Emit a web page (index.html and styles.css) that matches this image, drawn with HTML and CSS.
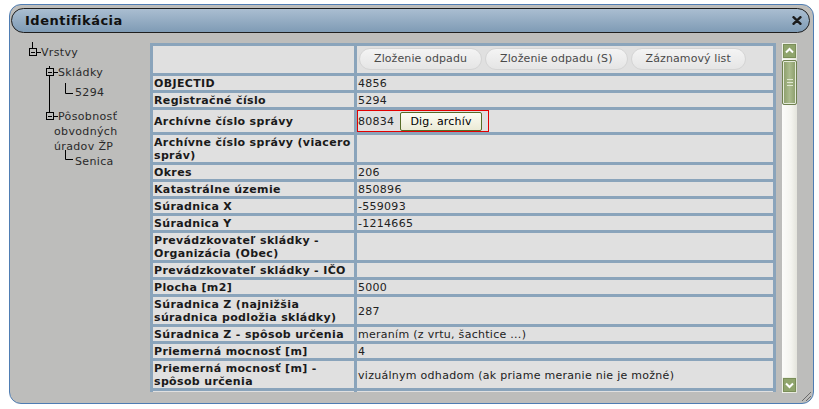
FILE: index.html
```html
<!DOCTYPE html>
<html lang="sk">
<head>
<meta charset="utf-8">
<title>Identifikácia</title>
<link rel="stylesheet" href="styles.css">
</head>
<body>
<div class="window">
  <div class="titlebar">
    <span class="title">Identifikácia</span>
    <svg class="close" width="10" height="9" viewBox="0 0 10 9"><path d="M1.5 1.2 L8.5 7.8 M8.5 1.2 L1.5 7.8" stroke="#1c1c1c" stroke-width="2.4" stroke-linecap="round"/></svg>
  </div>
  <div class="content">
    <div class="tree">
      <div class="node lvl0">
        <svg class="ic" width="12" height="15" viewBox="0 0 12 15"><path d="M3.5 -3 V3" stroke="#000"/><rect x="0.5" y="3.5" width="7" height="7" fill="none" stroke="#000"/><path d="M2 7.5 H6 M8 7.5 H12" stroke="#000"/></svg><span>Vrstvy</span>
      </div>
      <div class="node lvl1 skl">
        <svg class="ic" width="12" height="15" viewBox="0 0 12 15"><path d="M3.5 1 V3 M3.5 11 V47" stroke="#000"/><rect x="0.5" y="3.5" width="7" height="7" fill="none" stroke="#000"/><path d="M2 7.5 H6 M8 7.5 H12" stroke="#000"/></svg><span>Skládky</span>
      </div>
      <div class="node leaf l1">
        <svg class="lf" width="10" height="15" viewBox="0 0 10 15"><path d="M0.5 -2 V8.5 H8" stroke="#000" fill="none"/></svg><span>5294</span>
      </div>
      <div class="node lvl1 wrapnode">
        <svg class="ic" width="12" height="15" viewBox="0 0 12 15"><rect x="0.5" y="3.5" width="7" height="7" fill="none" stroke="#000"/><path d="M2 7.5 H6 M8 7.5 H12" stroke="#000"/></svg>Pôsobnosť obvodných úradov ŽP
      </div>
      <div class="node leaf l2">
        <svg class="lf" width="10" height="15" viewBox="0 0 10 15"><path d="M0.5 -4 V5.5 H8" stroke="#000" fill="none"/></svg><span>Senica</span>
      </div>
    </div>

    <div class="grid">
      <table class="attrs">
        <tr class="head">
          <td class="k"></td>
          <td class="v"><span class="pill">Zloženie odpadu</span><span class="pill">Zloženie odpadu (S)</span><span class="pill">Záznamový list</span></td>
        </tr>
        <tr><td class="k">OBJECTID</td><td class="v">4856</td></tr>
        <tr><td class="k">Registračné číslo</td><td class="v">5294</td></tr>
        <tr><td class="k">Archívne číslo správy</td><td class="v arch-cell"><span class="arch"><span>80834</span><span class="btn">Dig. archív</span></span></td></tr>
        <tr><td class="k">Archívne číslo správy (viacero správ)</td><td class="v"></td></tr>
        <tr><td class="k">Okres</td><td class="v">206</td></tr>
        <tr><td class="k">Katastrálne územie</td><td class="v">850896</td></tr>
        <tr><td class="k">Súradnica X</td><td class="v">-559093</td></tr>
        <tr><td class="k">Súradnica Y</td><td class="v">-1214665</td></tr>
        <tr><td class="k">Prevádzkovateľ skládky - Organizácia (Obec)</td><td class="v"></td></tr>
        <tr><td class="k">Prevádzkovateľ skládky - IČO</td><td class="v"></td></tr>
        <tr><td class="k">Plocha [m2]</td><td class="v">5000</td></tr>
        <tr><td class="k">Súradnica Z (najnižšia súradnica podložia skládky)</td><td class="v">287</td></tr>
        <tr><td class="k">Súradnica Z - spôsob určenia</td><td class="v">meraním (z vrtu, šachtice ...)</td></tr>
        <tr><td class="k">Priemerná mocnosť [m]</td><td class="v">4</td></tr>
        <tr><td class="k">Priemerná mocnosť [m] - spôsob určenia</td><td class="v">vizuálnym odhadom (ak priame meranie nie je možné)</td></tr>
        <tr class="tail"><td class="k"></td><td class="v"></td></tr>
      </table>
    </div>

    <div class="scrollbar">
      <div class="sbtn">
        <svg width="15" height="16" viewBox="0 0 15 16"><rect x="0.5" y="0.5" width="14" height="15" fill="#dfe5d3"/><rect x="1.5" y="1.5" width="12" height="13" fill="#8fa46c" stroke="#7a8e58"/><path d="M4 9.5 L7.5 6 L11 9.5" stroke="#fff" stroke-width="2" fill="none"/></svg>
      </div>
      <div class="thumb"><span></span><span></span><span></span></div>
      <div class="track"></div>
      <div class="sbtn">
        <svg width="15" height="16" viewBox="0 0 15 16"><rect x="0.5" y="0.5" width="14" height="15" fill="#dfe5d3"/><rect x="1.5" y="1.5" width="12" height="13" fill="#8fa46c" stroke="#7a8e58"/><path d="M4 6.5 L7.5 10 L11 6.5" stroke="#fff" stroke-width="2" fill="none"/></svg>
      </div>
    </div>
  </div>
  <svg class="grip" width="12" height="12" viewBox="0 0 12 12"><path d="M11 2 L2 11 M11 6 L6 11 M11 9 L9 11" stroke="#6a6a6a" stroke-width="1"/></svg>
</div>
</body>
</html>
```
FILE: styles.css
```css
html, body {
  margin: 0;
  padding: 0;
  background: #ffffff;
}

body {
  font-family: "DejaVu Sans", Verdana, sans-serif;
  font-size: 11px;
  letter-spacing: 0.35px;
  color: #1e1e1e;
}

.window {
  position: relative;
  box-sizing: border-box;
  margin: 4px 0 0 9px;
  width: 805px;
  height: 400px;
  border: 1px solid #4f7db3;
  border-radius: 12px;
  background: #bdbdbb;
  overflow: hidden;
}

.titlebar {
  box-sizing: border-box;
  margin: 3px 3px 0 1px;
  height: 25px;
  border: 1px solid #1e1e1e;
  border-radius: 13px;
  background: linear-gradient(#aabed1, #7f9bb5);
  display: flex;
  align-items: center;
  justify-content: space-between;
  padding: 0 7px 0 13px;
}

.title {
  font-weight: bold;
  font-size: 13px;
  letter-spacing: 0.5px;
  color: #111;
}

.close {
  display: block;
}

.content {
  display: flex;
  align-items: flex-start;
  margin-top: 10px;
  height: 350px;
}

/* tree */
.tree {
  width: 140px;
  flex: none;
  padding-top: 2px;
  color: #2a2a2a;
}

.node {
  line-height: 15px;
  display: flex;
  align-items: flex-start;
  white-space: nowrap;
}

.node svg {
  overflow: visible;
  flex: none;
  display: block;
}

.lvl0 { margin-left: 19px; }
.lvl1 { margin-left: 36px; margin-top: 5px; }
.leaf.l1 { margin-left: 55px; margin-top: 5px; }
.leaf.l2 { margin-left: 55px; }

.wrapnode {
  display: block;
  white-space: normal;
  margin-left: 44px;
  margin-top: 9px;
  width: 80px;
  text-indent: -8px;
}

.wrapnode svg {
  display: inline-block;
  vertical-align: top;
}

/* grid */
.grid {
  width: 626px;
  height: 349px;
  overflow: hidden;
  flex: none;
}

.attrs {
  width: 626px;
  border-collapse: separate;
  border-spacing: 3px;
  background: #8aa4bb;
  table-layout: fixed;
}

.attrs td {
  background: #e0e0e0;
  line-height: 13px;
  vertical-align: middle;
  padding: 1px 0 0 1px;
}

.attrs td.k {
  width: 199px;
  font-weight: bold;
  color: #1a1a1a;
}

.attrs td.v {
  color: #222;
  letter-spacing: 0.28px;
}

.attrs tr.head td {
  padding: 2px 0 3px 2px;
  height: 22px;
}

.attrs tr.tail td {
  height: 27px;
}

.pill {
  display: inline-block;
  box-sizing: border-box;
  height: 22px;
  line-height: 20px;
  padding: 0 14px;
  margin-right: 3px;
  border: 1px solid #d4d4d4;
  border-radius: 11px;
  background: linear-gradient(#f4f4f4, #e5e5e5);
  color: #4a4a4a;
  letter-spacing: 0.1px;
  vertical-align: top;
}

.attrs td.arch-cell {
  padding: 0;
}

.arch {
  display: inline-flex;
  align-items: center;
  gap: 6px;
  box-sizing: border-box;
  height: 22px;
  border: 1px solid #e30000;
  padding: 0 6px 0 0;
  vertical-align: top;
}

.btn {
  display: inline-block;
  box-sizing: border-box;
  height: 19px;
  line-height: 17px;
  padding: 0 9px;
  border: 1px solid #566b26;
  border-radius: 2px;
  background: linear-gradient(#fdfdf4, #ebead6);
  color: #000;
  letter-spacing: 0.2px;
}

/* scrollbar */
.scrollbar {
  flex: none;
  margin-left: 6px;
  width: 15px;
  height: 350px;
  display: flex;
  flex-direction: column;
  background: linear-gradient(to right, #fcfcfa, #f4f4ef 60%, #e4e4dc);
}

.sbtn svg {
  display: block;
}

.thumb {
  box-sizing: border-box;
  margin-top: 1px;
  height: 45px;
  border: 1px solid #6f8150;
  border-radius: 2px;
  box-shadow: inset 0 0 0 1px #e4eada;
  background: linear-gradient(to right, #8a9c69, #abbb8e 50%, #8a9c69);
  display: flex;
  flex-direction: column;
  align-items: center;
  justify-content: center;
  gap: 2px;
}

.thumb span {
  display: block;
  width: 6px;
  height: 1px;
  background: #dfe7d0;
}

.track {
  flex: 1;
}

.grip {
  position: absolute;
  right: 1px;
  bottom: 1px;
}
```
